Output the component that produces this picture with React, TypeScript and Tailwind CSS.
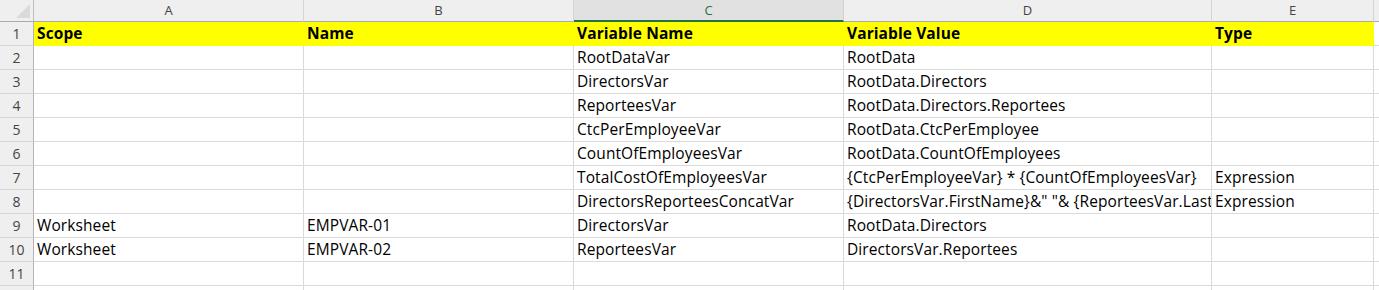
const cols = [
  { key: "A", w: "w-[270px]" },
  { key: "B", w: "w-[270px]" },
  { key: "C", w: "w-[270px]" },
  { key: "D", w: "w-[368px]" },
  { key: "E", w: "w-[162px]" },
];

const rows: string[][] = [
  ["Scope", "Name", "Variable Name", "Variable Value", "Type"],
  ["", "", "RootDataVar", "RootData", ""],
  ["", "", "DirectorsVar", "RootData.Directors", ""],
  ["", "", "ReporteesVar", "RootData.Directors.Reportees", ""],
  ["", "", "CtcPerEmployeeVar", "RootData.CtcPerEmployee", ""],
  ["", "", "CountOfEmployeesVar", "RootData.CountOfEmployees", ""],
  ["", "", "TotalCostOfEmployeesVar", "{CtcPerEmployeeVar} * {CountOfEmployeesVar}", "Expression"],
  ["", "", "DirectorsReporteesConcatVar", '{DirectorsVar.FirstName}&" "& {ReporteesVar.LastName}', "Expression"],
  ["Worksheet", "EMPVAR-01", "DirectorsVar", "RootData.Directors", ""],
  ["Worksheet", "EMPVAR-02", "ReporteesVar", "DirectorsVar.Reportees", ""],
  ["", "", "", "", ""],
];

const font = "font-['Open_Sans','Noto_Sans',sans-serif]";

const App = () => {
  return (
    <div className={`w-[1379px] h-[290px] overflow-hidden bg-white ${font}`}>
      {/* column headers */}
      <div className="flex h-[22px] bg-[#efefef]">
        <div className="w-[34px] shrink-0 border-r border-b border-[#bdbdbd] border-b-[#ababab] relative">
          <svg className="absolute right-[3px] bottom-[3px]" width="14" height="14" viewBox="0 0 14 14">
            <polygon points="14,0 14,14 0,14" fill="#dadada" />
          </svg>
        </div>
        {cols.map((c) =>
          c.key === "C" ? (
            <div
              key={c.key}
              className={`${c.w} shrink-0 bg-[#e1e1e1] border-r border-[#d0d0d0] border-b-2 border-b-[#217346] text-center text-[13px] leading-[20px] text-[#217346]`}
            >
              {c.key}
            </div>
          ) : (
            <div
              key={c.key}
              className={`${c.w} shrink-0 border-r border-[#d5d5d5] border-b border-b-[#ababab] text-center text-[13px] leading-[21px] text-[#444]`}
            >
              {c.key}
            </div>
          )
        )}
        <div className="flex-1 border-b border-[#ababab]" />
      </div>

      {/* rows */}
      {rows.map((r, i) => {
        const head = i === 0;
        return (
          <div key={i} className="flex h-[24px]">
            <div className="w-[34px] shrink-0 bg-[#efefef] border-r border-[#b4b4b4] border-b border-b-[#d5d5d5] text-center text-[14px] leading-[23px] text-[#444]">
              {i + 1}
            </div>
            {cols.map((c, j) => (
              <div
                key={c.key}
                className={`${c.w} shrink-0 overflow-hidden whitespace-nowrap pl-[3px] text-[15.5px] tracking-[0.1px] leading-[23px] text-black border-b ${
                  head
                    ? "bg-[#ffff00] border-r border-[#ffff00] font-bold"
                    : "border-r border-[#dadada] border-b-[#dadada]"
                }`}
              >
                {r[j]}
              </div>
            ))}
            <div className="flex-1 border-b border-[#dadada]" />
          </div>
        );
      })}
      <div className="flex h-[24px]">
        <div className="w-[34px] shrink-0 bg-[#efefef] border-r border-[#b4b4b4]" />
        {cols.map((c) => (
          <div key={c.key} className={`${c.w} shrink-0 border-r border-[#dadada]`} />
        ))}
      </div>
    </div>
  );
};

export default App;
